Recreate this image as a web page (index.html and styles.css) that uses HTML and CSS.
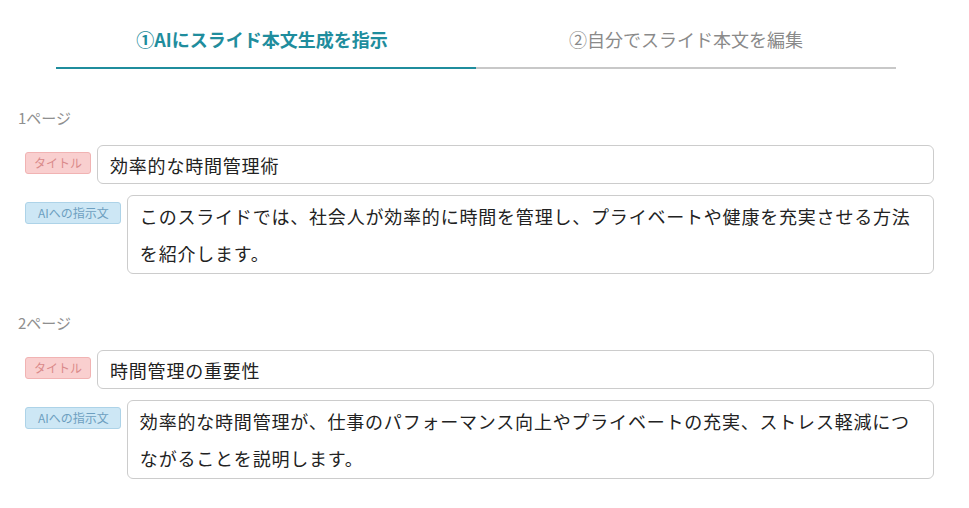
FILE: index.html
```html
<!DOCTYPE html>
<html lang="ja">
<head>
<meta charset="utf-8">
<title>スライド本文</title>
<link rel="stylesheet" href="styles.css">
</head>
<body>
<div class="page">
  <div class="tabs">
    <div class="tab active">①AIにスライド本文生成を指示</div>
    <div class="tab">②自分でスライド本文を編集</div>
  </div>

  <section class="slide">
    <div class="page-label">1ページ</div>
    <div class="row">
      <span class="badge badge-title">タイトル</span>
      <div class="field field-title">効率的な時間管理術</div>
    </div>
    <div class="row">
      <span class="badge badge-ai">AIへの指示文</span>
      <div class="field field-ai">このスライドでは、社会人が効率的に時間を管理し、プライベートや健康を充実させる方法を紹介します。</div>
    </div>
  </section>

  <section class="slide">
    <div class="page-label">2ページ</div>
    <div class="row">
      <span class="badge badge-title">タイトル</span>
      <div class="field field-title">時間管理の重要性</div>
    </div>
    <div class="row">
      <span class="badge badge-ai">AIへの指示文</span>
      <div class="field field-ai">効率的な時間管理が、仕事のパフォーマンス向上やプライベートの充実、ストレス軽減につながることを説明します。</div>
    </div>
  </section>
</div>
</body>
</html>
```

FILE: styles.css
```css
* { box-sizing: border-box; }

html, body {
  margin: 0;
  padding: 0;
  background: #ffffff;
}

body {
  font-family: "Noto Sans CJK JP", "Noto Sans", sans-serif;
  color: #333333;
}

.page {
  width: 916px;
  margin-left: 18px;
}

.tabs {
  display: flex;
  margin: 0 38px;
}

.tab {
  flex: 1 1 0;
  text-align: center;
  font-size: 18px;
  line-height: 26px;
  padding: 26px 0 15px;
  color: #8a8a8a;
  border-bottom: 2px solid #c8c8c8;
}

.tab.active {
  color: #1f8d9d;
  font-weight: bold;
  border-bottom-color: #1f8d9d;
  text-indent: -8px;
}

.slide {
  margin-top: 39px;
}

.page-label {
  font-size: 15px;
  line-height: 20px;
  color: #8f8f8f;
  margin-bottom: 17px;
}

.row {
  display: flex;
  align-items: flex-start;
  gap: 6px;
  padding-left: 7px;
  margin-bottom: 11px;
}

.row:last-child {
  margin-bottom: 0;
}

.badge {
  flex: none;
  margin-top: 7px;
  font-size: 12px;
  line-height: 20px;
  padding: 0 8px;
  border-radius: 3px;
  border: 1px solid;
  white-space: nowrap;
}

.badge-title {
  background: #f9cfcf;
  border-color: #f1b3b3;
  color: #d98a8a;
}

.badge-ai {
  background: #cde7f5;
  border-color: #add3e8;
  color: #6d9fc0;
  padding: 0 11px 0 12px;
}

.field {
  flex: 1;
  border: 1px solid #cccccc;
  border-radius: 6px;
  font-size: 18px;
  letter-spacing: 0.8px;
  color: #222222;
  padding: 2px 12px 0;
}

.field-title {
  line-height: 35px;
  height: 39px;
}

.field-ai {
  line-height: 37px;
  padding: 2px 12px 1px;
}
```
